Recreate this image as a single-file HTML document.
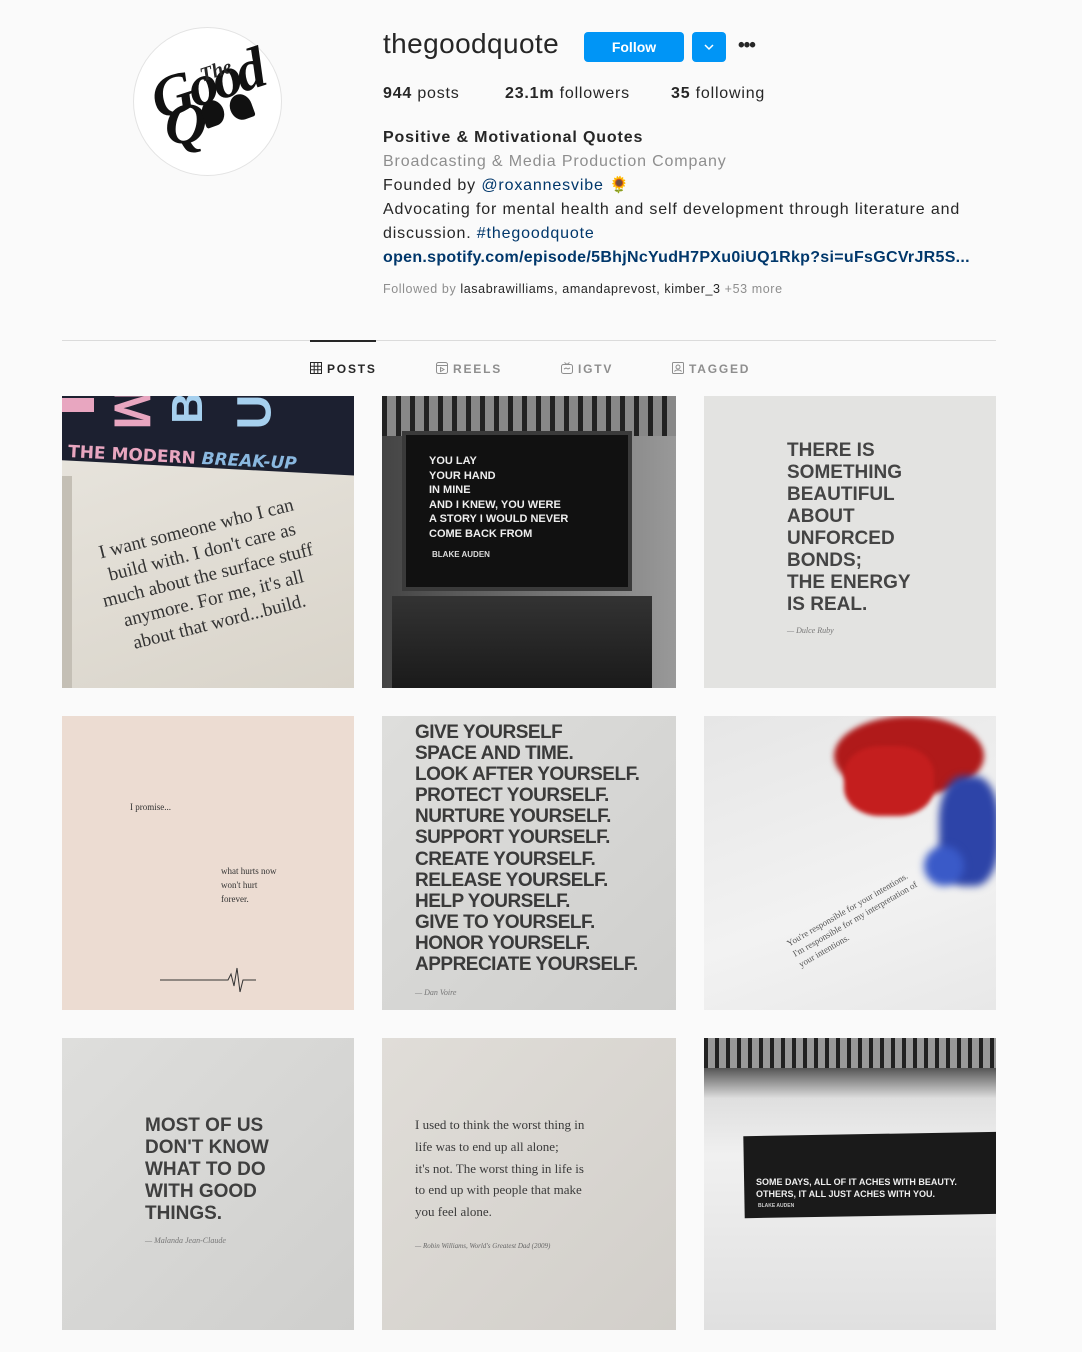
<!DOCTYPE html>
<html><head><meta charset="utf-8"><style>
*{margin:0;padding:0;box-sizing:border-box}
body{width:1082px;height:1352px;background:#fafafa;font-family:"Liberation Sans",sans-serif;color:#262626;position:relative;overflow:hidden}
.a{position:absolute}
.t{position:absolute;overflow:hidden}
.sans{font-family:"Liberation Sans",sans-serif;font-weight:bold;text-transform:uppercase}
.serif{font-family:"Liberation Serif",serif}
</style></head><body>
<!-- avatar -->
<div class="a" style="left:133px;top:27px;width:149px;height:149px;border-radius:50%;background:#fff;border:1px solid #e3e3e3"></div>
<div class="a serif" style="left:150px;top:55px;font-size:58px;font-style:italic;font-weight:bold;transform:rotate(-18deg);letter-spacing:-4px;color:#111;line-height:1">Good</div>
<div class="a serif" style="left:200px;top:60px;font-size:20px;font-style:italic;font-weight:bold;transform:rotate(-18deg)">The</div>
<div class="a serif" style="left:165px;top:95px;font-size:58px;font-style:italic;font-weight:bold;color:#111;line-height:1">Q</div>
<div class="a" style="left:202px;top:100px;width:22px;height:26px;border-radius:50% 50% 50% 10%;background:#111;transform:rotate(-20deg)"></div>
<div class="a" style="left:230px;top:94px;width:22px;height:26px;border-radius:50% 50% 10% 50%;background:#111;transform:rotate(-20deg)"></div>
<!-- header -->
<div class="a" style="left:383px;top:28px;font-size:28px;font-weight:300;color:#262626;letter-spacing:0.4px">thegoodquote</div>
<div class="a" style="left:584px;top:32px;width:100px;height:30px;background:#0095f6;border-radius:4px;color:#fff;font-weight:bold;font-size:14px;text-align:center;line-height:30px">Follow</div>
<div class="a" style="left:692px;top:32px;width:34px;height:30px;background:#0095f6;border-radius:4px"><svg width="34" height="30"><path d="M13 13l4 4 4-4" stroke="#fff" stroke-width="1.5" fill="none"/></svg></div>
<div class="a" style="left:738px;top:35px;font-size:19px;font-weight:bold;letter-spacing:-1px">•••</div>
<div class="a" style="left:383px;top:85px;font-size:16px;white-space:nowrap;letter-spacing:0.8px"><b>944</b> posts</div>
<div class="a" style="left:505px;top:85px;font-size:16px;white-space:nowrap;letter-spacing:0.8px"><b>23.1m</b> followers</div>
<div class="a" style="left:671px;top:85px;font-size:16px;white-space:nowrap;letter-spacing:0.8px"><b>35</b> following</div>
<div class="a" style="left:383px;top:126px;font-size:16px;line-height:24px;white-space:nowrap;letter-spacing:0.85px">
<b>Positive &amp; Motivational Quotes</b><br>
<span style="color:#8e8e8e">Broadcasting &amp; Media Production Company</span><br>
Founded by <span style="color:#00376b">@roxannesvibe</span> 🌻<br>
Advocating for mental health and self development through literature and<br>
discussion. <span style="color:#00376b">#thegoodquote</span><br>
<b style="color:#00376b;letter-spacing:0.3px">open.spotify.com/episode/5BhjNcYudH7PXu0iUQ1Rkp?si=uFsGCVrJR5S...</b></div>
<div class="a" style="left:383px;top:282px;font-size:12.5px;color:#8e8e8e;white-space:nowrap;letter-spacing:0.6px">Followed by <span style="color:#262626">lasabrawilliams, amandaprevost, kimber_3</span> +53 more</div>
<!-- tabs -->
<div class="a" style="left:62px;top:340px;width:934px;height:1px;background:#dbdbdb"></div>
<div class="a" style="left:310px;top:340px;width:66px;height:2px;background:#262626"></div>
<div class="a" style="top:362px;left:310px;font-size:12px;font-weight:bold;letter-spacing:1.8px;color:#262626;white-space:nowrap"><svg width="12" height="12" style="vertical-align:-1px;margin-right:5px"><path d="M.5 .5h11v11H.5zM4.2 .5v11M7.8 .5v11M.5 4.2h11M.5 7.8h11" stroke="#262626" fill="none"/></svg>POSTS</div>
<div class="a" style="top:362px;left:436px;font-size:12px;font-weight:bold;letter-spacing:1.8px;color:#8e8e8e;white-space:nowrap"><svg width="12" height="12" style="vertical-align:-1px;margin-right:5px"><rect x=".5" y=".5" width="11" height="11" rx="2" stroke="#8e8e8e" fill="none"/><path d="M.5 3.5h11M4.5 5.5v4l3.5-2z" stroke="#8e8e8e" fill="none"/></svg>REELS</div>
<div class="a" style="top:362px;left:561px;font-size:12px;font-weight:bold;letter-spacing:1.8px;color:#8e8e8e;white-space:nowrap"><svg width="12" height="12" style="vertical-align:-1px;margin-right:5px"><rect x=".5" y="2.5" width="11" height="9" rx="2" stroke="#8e8e8e" fill="none"/><path d="M3.5 .5l2.5 2 2.5-2M3 7l2-1 2 1 2-1" stroke="#8e8e8e" fill="none"/></svg>IGTV</div>
<div class="a" style="top:362px;left:672px;font-size:12px;font-weight:bold;letter-spacing:1.8px;color:#8e8e8e;white-space:nowrap"><svg width="12" height="12" style="vertical-align:-1px;margin-right:5px"><rect x=".5" y=".5" width="11" height="11" rx="1" stroke="#8e8e8e" fill="none"/><circle cx="6" cy="5" r="2" stroke="#8e8e8e" fill="none"/><path d="M2.5 9.5c1-2 6-2 7 0" stroke="#8e8e8e" fill="none"/></svg>TAGGED</div>

<!-- row 1 -->
<div class="t" style="left:62px;top:396px;width:292px;height:292px;background:linear-gradient(160deg,#e9e6df,#d9d4ca)">
 <div class="a" style="left:-10px;top:-20px;width:320px;height:92px;background:#1c2030;transform:rotate(3deg)"></div>
 <div class="a sans" style="left:-4px;top:2px;width:36px;height:14px;background:#e8a6c0"></div>
 <div class="a sans" style="left:48px;top:-14px;font-size:52px;color:#e8a6c0;transform:rotate(90deg);line-height:1">M</div>
 <div class="a sans" style="left:110px;top:-10px;font-size:44px;color:#a6d0ee;transform:rotate(-90deg);line-height:1">B</div>
 <div class="a sans" style="left:176px;top:-8px;font-size:48px;color:#a6d0ee;transform:rotate(-90deg);line-height:1">U</div>
 <div class="a sans" style="left:6px;top:52px;font-size:17px;color:#e8a6c0;transform:rotate(3deg);white-space:nowrap;font-family:'DejaVu Sans',sans-serif">THE MODERN <i style="color:#8ab8e0">BREAK-UP</i></div>
 <div class="a" style="left:0;top:80px;width:10px;height:212px;background:#c4bfb5"></div>
 <div class="a serif" style="left:38px;top:120px;font-size:19px;line-height:24px;text-align:center;transform:rotate(-14deg);color:#333;white-space:nowrap">I want someone who I can<br>build with. I don't care as<br>much about the surface stuff<br>anymore. For me, it's all<br>about that word...build.</div>
</div>
<div class="t" style="left:382px;top:396px;width:294px;height:292px;background:linear-gradient(90deg,#444,#777 60%,#999)">
 <div class="a" style="left:0;top:0;width:294px;height:40px;background:repeating-linear-gradient(90deg,#222 0 5px,#888 5px 14px)"></div>
 <div class="a" style="left:20px;top:35px;width:230px;height:160px;background:#111;border:4px solid #3a3a3a"></div>
 <div class="a" style="left:10px;top:200px;width:260px;height:92px;background:linear-gradient(#333,#1a1a1a)"></div>
 <div class="a sans" style="left:47px;top:58px;font-size:11px;line-height:14.5px;color:#eee;white-space:nowrap">You lay<br>your hand<br>in mine<br>and I knew, you were<br>a story I would never<br>come back from</div>
 <div class="a sans" style="left:50px;top:154px;font-size:8px;color:#ddd">Blake Auden</div>
</div>
<div class="t" style="left:704px;top:396px;width:292px;height:292px;background:#e3e3e1">
 <div class="a sans" style="left:83px;top:44px;font-size:19px;line-height:22px;color:#444;white-space:nowrap">There is<br>something<br>beautiful<br>about<br>unforced<br>bonds;<br>the energy<br>is real.</div>
 <div class="a serif" style="left:83px;top:230px;font-size:8px;font-style:italic;color:#777">— Dulce Ruby</div>
</div>
<!-- row 2 -->
<div class="t" style="left:62px;top:716px;width:292px;height:294px;background:#ecdcd2">
 <div class="a serif" style="left:68px;top:86px;font-size:9px;color:#333">I promise...</div>
 <div class="a serif" style="left:159px;top:148px;font-size:9px;line-height:14px;color:#333">what hurts now<br>won't hurt<br>forever.</div>
 <svg class="a" style="left:98px;top:246px" width="96" height="36"><path d="M0 18h68l3-6 3 12 3-18 3 24 3-12h16" stroke="#333" fill="none"/></svg>
</div>
<div class="t" style="left:382px;top:716px;width:294px;height:294px;background:linear-gradient(135deg,#dededc,#cfcfcd)">
 <div class="a sans" style="left:33px;top:6px;font-size:19px;line-height:21.1px;color:#3a3a3a;white-space:nowrap;letter-spacing:-0.5px">Give yourself<br>space and time.<br>Look after yourself.<br>Protect yourself.<br>Nurture yourself.<br>Support yourself.<br>Create yourself.<br>Release yourself.<br>Help yourself.<br>Give to yourself.<br>Honor yourself.<br>Appreciate yourself.</div>
 <div class="a serif" style="left:33px;top:272px;font-size:8px;font-style:italic;color:#777">— Dan Voire</div>
</div>
<div class="t" style="left:704px;top:716px;width:292px;height:294px;background:linear-gradient(160deg,#e6e6e6,#f2f2f2 60%,#e8e8e8)">
 <div class="a" style="left:130px;top:0;width:150px;height:80px;border-radius:50%;background:#b01a1a;filter:blur(3px)"></div>
 <div class="a" style="left:140px;top:30px;width:90px;height:70px;border-radius:40%;background:#c41e1e;filter:blur(2px)"></div>
 <div class="a" style="left:235px;top:60px;width:60px;height:110px;border-radius:40%;background:#2d44a8;filter:blur(4px)"></div>
 <div class="a" style="left:220px;top:130px;width:40px;height:40px;border-radius:50%;background:#3a5ac8;filter:blur(4px)"></div>
 <div class="a serif" style="left:80px;top:185px;font-size:9px;line-height:12px;color:#555;transform:rotate(-30deg);white-space:nowrap">You're responsible for your intentions.<br>I'm responsible for my interpretation of<br>your intentions.</div>
</div>
<!-- row 3 -->
<div class="t" style="left:62px;top:1038px;width:292px;height:292px;background:linear-gradient(135deg,#dededc,#cfcfcd)">
 <div class="a sans" style="left:83px;top:77px;font-size:19px;line-height:22px;color:#3f3f3f;white-space:nowrap">Most of us<br>don't know<br>what to do<br>with good<br>things.</div>
 <div class="a serif" style="left:83px;top:198px;font-size:8px;font-style:italic;color:#777">— Malanda Jean-Claude</div>
</div>
<div class="t" style="left:382px;top:1038px;width:294px;height:292px;background:linear-gradient(135deg,#e0ddd8,#d2cfca)">
 <div class="a serif" style="left:33px;top:76px;font-size:13px;line-height:21.8px;color:#3a3a3a;white-space:nowrap">I used to think the worst thing in<br>life was to end up all alone;<br>it's not. The worst thing in life is<br>to end up with people that make<br>you feel alone.</div>
 <div class="a serif" style="left:33px;top:204px;font-size:7px;font-style:italic;color:#666">— Robin Williams, World's Greatest Dad (2009)</div>
</div>
<div class="t" style="left:704px;top:1038px;width:292px;height:292px;background:linear-gradient(#ccc,#f0f0f0 40%,#e0e0e0)">
 <div class="a" style="left:0;top:0;width:292px;height:36px;background:repeating-linear-gradient(90deg,#222 0 4px,#999 4px 11px)"></div>
 <div class="a" style="left:0;top:30px;width:292px;height:30px;background:linear-gradient(#555,#ddd)"></div>
 <div class="a" style="left:40px;top:96px;width:256px;height:82px;background:#1a1a1a;transform:rotate(-1deg)"></div>
 <div class="a sans" style="left:52px;top:138px;font-size:9px;line-height:12px;color:#eee;white-space:nowrap">Some days, all of it aches with beauty.<br>Others, it all just aches with you.</div>
 <div class="a sans" style="left:54px;top:165px;font-size:5px;color:#ccc">Blake Auden</div>
</div>
</body></html>
